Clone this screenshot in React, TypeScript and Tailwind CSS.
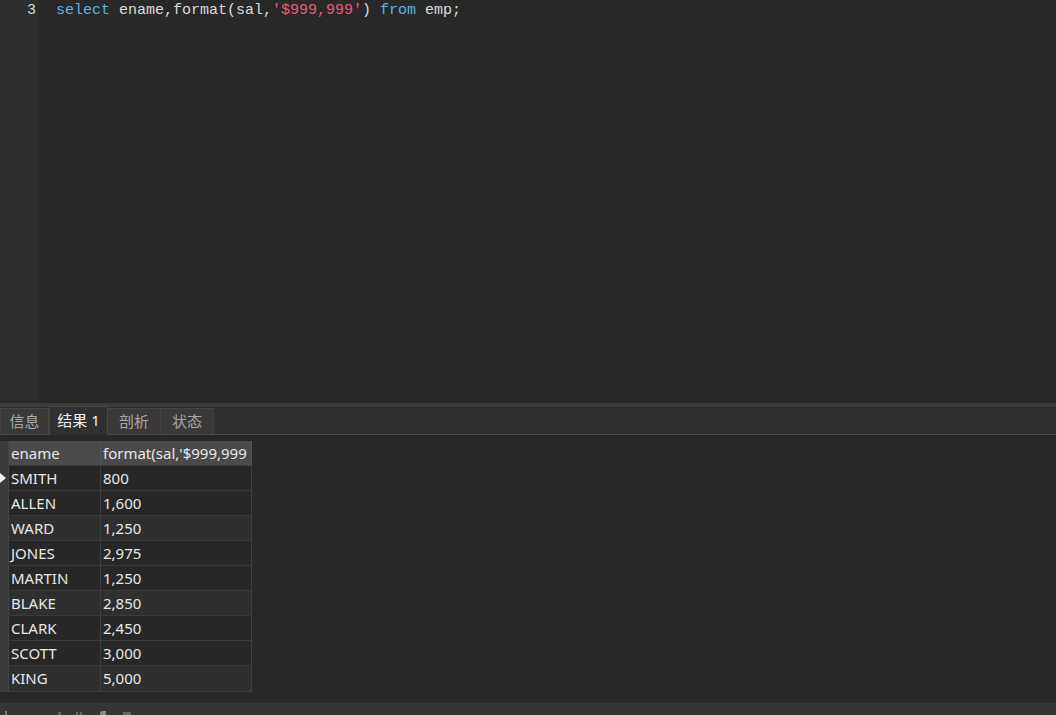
import React from "react";

const rows: [string, string][] = [
  ["SMITH", "800"],
  ["ALLEN", "1,600"],
  ["WARD", "1,250"],
  ["JONES", "2,975"],
  ["MARTIN", "1,250"],
  ["BLAKE", "2,850"],
  ["CLARK", "2,450"],
  ["SCOTT", "3,000"],
  ["KING", "5,000"],
];

const light = new Set([2, 5, 8]);

export default function App() {
  const sans = { fontFamily: '"Noto Sans", "Noto Sans CJK SC", sans-serif' };
  return (
    <div className="w-[1056px] h-[715px] flex flex-col bg-[#282828] overflow-hidden" style={sans}>
      {/* Editor */}
      <div className="h-[403px] flex shrink-0">
        <div className="w-[39px] bg-[#2d2d2d] shrink-0 pt-[1px]">
          <div
            className="h-[20px] leading-[20px] text-right pr-[3px] text-[15px] text-[#dcdcdc]"
            style={{ fontFamily: '"Liberation Mono", monospace' }}
          >
            3
          </div>
        </div>
        <div className="flex-1 bg-[#282828] pl-[17px] pt-[1px]">
          <div
            className="h-[20px] leading-[20px] text-[15px] text-[#dcdcdc] whitespace-pre"
            style={{ fontFamily: '"Liberation Mono", monospace' }}
          >
            <span className="text-[#5fb3e6]">select</span> ename,format(sal,
            <span className="text-[#ef5a78]">'$999,999'</span>){" "}
            <span className="text-[#5fb3e6]">from</span> emp;
          </div>
        </div>
      </div>
      {/* Splitter */}
      <div className="h-[4px] bg-[#3c3c3c] shrink-0" />
      {/* Tab bar */}
      <div className="h-[28px] bg-[#303030] border-b border-[#4c4c4c] flex items-end shrink-0">
        <div className="h-[26px] w-[49px] bg-[#393939] border border-b-0 border-[#444] text-[#a8a8a8] text-[15px] flex items-center justify-center">
          信息
        </div>
        <div className="h-[29px] w-[59px] -mb-[1px] bg-[#303030] border border-b-0 border-[#4a4a4a] text-[#f0f0f0] text-[15px] flex items-center justify-center pb-[2px]">
          结果 1
        </div>
        <div className="h-[26px] w-[53px] bg-[#393939] border border-b-0 border-l-0 border-[#444] text-[#a8a8a8] text-[15px] flex items-center justify-center">
          剖析
        </div>
        <div className="h-[26px] w-[53px] bg-[#393939] border border-b-0 border-l-0 border-[#444] text-[#a8a8a8] text-[15px] flex items-center justify-center">
          状态
        </div>
      </div>
      {/* Results grid */}
      <div className="h-[268px] bg-[#282828] pt-[6px] shrink-0">
        <div className="w-[252px] border-b border-[#3e3e3e]">
          <div className="flex h-[25px] border-b border-[#3e3e3e]">
            <div className="w-[9px] bg-[#3a3a3a] border-r border-[#444] shrink-0" />
            <div className="w-[92px] bg-[#4a4a4a] border-r border-[#555] pl-[2px] text-[15px] leading-[24px] text-[#e8e8e8] overflow-hidden whitespace-nowrap">
              ename
            </div>
            <div className="w-[151px] bg-[#4a4a4a] border-r border-[#555] pl-[2px] text-[15px] leading-[24px] text-[#e8e8e8] overflow-hidden whitespace-nowrap">
              format(sal,'$999,999
            </div>
          </div>
          {rows.map(([n, v], i) => {
            const bg = light.has(i) ? "bg-[#2f2f2f]" : "bg-[#272727]";
            return (
              <div key={n} className="flex h-[25px] border-b border-[#3a3a3a] last:border-b-0">
                <div className="w-[9px] bg-[#3a3a3a] border-r border-[#444] shrink-0 relative">
                  {i === 0 && (
                    <div className="absolute left-0 top-[7px] w-0 h-0 border-y-[5px] border-y-transparent border-l-[6px] border-l-[#f0f0f0]" />
                  )}
                </div>
                <div className={`w-[92px] ${bg} border-r border-[#3e3e3e] pl-[2px] text-[15px] leading-[24px] text-[#e8e8e8]`}>
                  {n}
                </div>
                <div className={`w-[151px] ${bg} border-r border-[#3e3e3e] pl-[2px] text-[15px] leading-[24px] text-[#e8e8e8]`}>
                  {v}
                </div>
              </div>
            );
          })}
        </div>
      </div>
      {/* Bottom toolbar */}
      <div className="flex-1 bg-[#353535] relative">
        <div className="absolute top-[8px] left-[5px] w-[2px] h-[4px] bg-[#777]" />
        <div className="absolute top-[9px] left-[58px] w-[3px] h-[3px] bg-[#666]" />
        <div className="absolute top-[9px] left-[76px] w-[2px] h-[3px] bg-[#666]" />
        <div className="absolute top-[9px] left-[80px] w-[2px] h-[3px] bg-[#666]" />
        <div className="absolute top-[8px] left-[100px] w-[6px] h-[4px] bg-[#888] rounded-tl-[3px]" />
        <div className="absolute top-[9px] left-[123px] w-[8px] h-[3px] bg-[#666]" />
      </div>
    </div>
  );
}
